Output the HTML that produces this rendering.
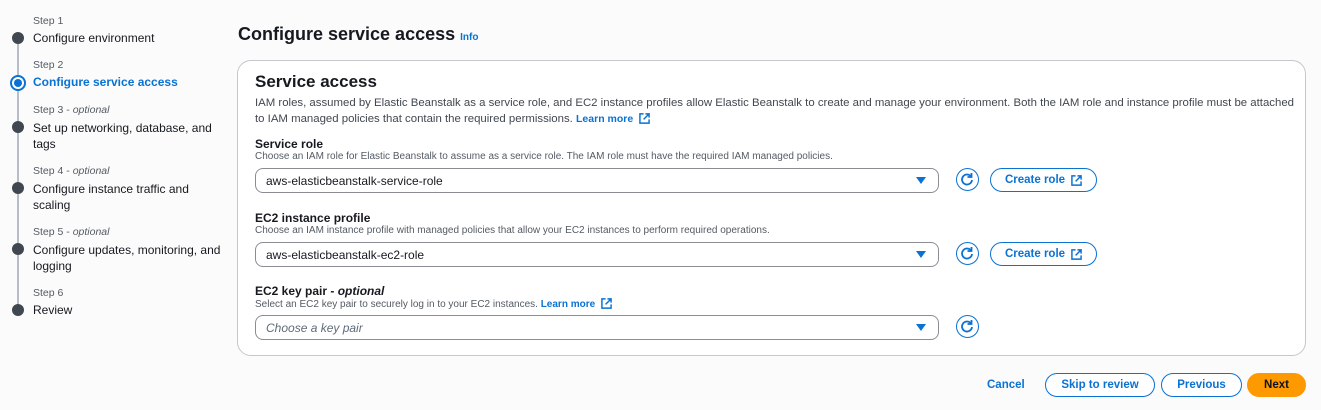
<!DOCTYPE html>
<html><head><style>
*{box-sizing:border-box;margin:0;padding:0}
body{width:1321px;height:410px;background:#fbfbfb;font-family:"Liberation Sans",sans-serif;color:#16191f;position:relative;overflow:hidden}
.a{position:absolute;white-space:nowrap}
.st{font-size:10.5px;color:#545b64}
.st i{font-style:italic}
.sl{font-size:12px;color:#16191f}
.dot{position:absolute;left:12px;width:12px;height:12px;border-radius:50%;background:#414750}
.line{position:absolute;left:17px;width:2px;background:#b6bec9}
.card{position:absolute;left:237px;top:60px;width:1069px;height:296px;background:#fff;border:1px solid #c6c6cd;border-radius:14px}
.lab{font-size:12px;font-weight:bold}
.desc{font-size:10px;color:#545b64}
.sel{position:absolute;left:255px;width:684px;height:25px;border:1px solid #8c8c94;border-radius:8px;font-size:12px;padding:5px 10px;background:#fff}
.sel:after{content:"";position:absolute;right:12px;top:8px;border-left:5px solid transparent;border-right:5px solid transparent;border-top:7px solid #0972d3}
.rf{position:absolute;left:956px;width:23px;height:23px;border:1.5px solid #0972d3;border-radius:50%}
.btn{position:absolute;border:1.5px solid #0972d3;border-radius:14px;color:#0972d3;font-weight:bold;font-size:11.5px;display:flex;align-items:center;justify-content:center;background:#fff;height:24px}
.ext{display:inline-block;vertical-align:-2px;margin-left:6px}
a{color:#0972d3;text-decoration:none}
</style></head><body>
<div class="line" style="top:44px;height:32px"></div>
<div class="line" style="top:90px;height:35px"></div>
<div class="line" style="top:132px;height:50px"></div>
<div class="line" style="top:194px;height:50px"></div>
<div class="line" style="top:255px;height:50px"></div>
<div class="a st" style="left:33px;top:15px">Step 1</div>
<div class="a sl" style="left:33px;top:31px">Configure environment</div>
<div class="dot" style="top:32px"></div>
<div class="a st" style="left:33px;top:59px">Step 2</div>
<div class="a sl" style="left:33px;top:75px;color:#0972d3;font-weight:bold">Configure service access</div>
<div style="position:absolute;left:10px;top:75px;width:16px;height:16px;border:2px solid #0972d3;border-radius:50%;background:#fff"><div style="position:absolute;left:2px;top:2px;width:8px;height:8px;border-radius:50%;background:#0972d3"></div></div>
<div class="a st" style="left:33px;top:104px">Step 3 - <i>optional</i></div>
<div class="a sl" style="left:33px;top:120px;line-height:16px">Set up networking, database, and<br>tags</div>
<div class="dot" style="top:121px"></div>
<div class="a st" style="left:33px;top:165px">Step 4 - <i>optional</i></div>
<div class="a sl" style="left:33px;top:181px;line-height:16px">Configure instance traffic and<br>scaling</div>
<div class="dot" style="top:182px"></div>
<div class="a st" style="left:33px;top:226px">Step 5 - <i>optional</i></div>
<div class="a sl" style="left:33px;top:242px;line-height:16px">Configure updates, monitoring, and<br>logging</div>
<div class="dot" style="top:243px"></div>
<div class="a st" style="left:33px;top:287px">Step 6</div>
<div class="a sl" style="left:33px;top:303px">Review</div>
<div class="dot" style="top:304px"></div>

<div class="a" style="left:238px;top:24px;font-size:18px;font-weight:bold">Configure service access <a style="font-size:10px">Info</a></div>

<div class="card"></div>
<div class="a" style="left:255px;top:72px;font-size:17px;font-weight:bold">Service access</div>
<div class="a" style="left:255px;top:95px;font-size:11.4px;color:#414750;line-height:16px">IAM roles, assumed by Elastic Beanstalk as a service role, and EC2 instance profiles allow Elastic Beanstalk to create and manage your environment. Both the IAM role and instance profile must be attached<br>to IAM managed policies that contain the required permissions. <a style="font-weight:bold;font-size:10.5px">Learn more<svg class="ext" width="11" height="11" viewBox="0 0 12 12" fill="none" stroke="#0972d3" stroke-width="1.6"><path d="M5 1H1v10h10V7M7 1h4v4M11 1 5 7"/></svg></a></div>

<div class="a lab" style="left:255px;top:137px">Service role</div>
<div class="a desc" style="left:255px;top:151px">Choose an IAM role for Elastic Beanstalk to assume as a service role. The IAM role must have the required IAM managed policies.</div>
<div class="sel" style="top:168px">aws-elasticbeanstalk-service-role</div>
<div class="rf" style="top:168px"><svg width="20" height="20" viewBox="0 0 20 20" fill="none" stroke="#0972d3" stroke-width="1.8"><path d="M14 7.5A5 5 0 1 0 15 11"/><path d="M14.5 4v4h-4"/></svg></div>
<div class="btn" style="left:990px;top:168px;width:107px">Create role<svg class="ext" width="11" height="11" viewBox="0 0 12 12" fill="none" stroke="#0972d3" stroke-width="1.6"><path d="M5 1H1v10h10V7M7 1h4v4M11 1 5 7"/></svg></div>

<div class="a lab" style="left:255px;top:211px">EC2 instance profile</div>
<div class="a desc" style="left:255px;top:225px">Choose an IAM instance profile with managed policies that allow your EC2 instances to perform required operations.</div>
<div class="sel" style="top:242px">aws-elasticbeanstalk-ec2-role</div>
<div class="rf" style="top:242px"><svg width="20" height="20" viewBox="0 0 20 20" fill="none" stroke="#0972d3" stroke-width="1.8"><path d="M14 7.5A5 5 0 1 0 15 11"/><path d="M14.5 4v4h-4"/></svg></div>
<div class="btn" style="left:990px;top:242px;width:107px">Create role<svg class="ext" width="11" height="11" viewBox="0 0 12 12" fill="none" stroke="#0972d3" stroke-width="1.6"><path d="M5 1H1v10h10V7M7 1h4v4M11 1 5 7"/></svg></div>

<div class="a lab" style="left:255px;top:284px">EC2 key pair - <i>optional</i></div>
<div class="a desc" style="left:255px;top:298px">Select an EC2 key pair to securely log in to your EC2 instances. <a style="font-weight:bold">Learn more<svg class="ext" width="11" height="11" viewBox="0 0 12 12" fill="none" stroke="#0972d3" stroke-width="1.6"><path d="M5 1H1v10h10V7M7 1h4v4M11 1 5 7"/></svg></a></div>
<div class="sel" style="top:315px;color:#5f6b7a;font-style:italic">Choose a key pair</div>
<div class="rf" style="top:315px"><svg width="20" height="20" viewBox="0 0 20 20" fill="none" stroke="#0972d3" stroke-width="1.8"><path d="M14 7.5A5 5 0 1 0 15 11"/><path d="M14.5 4v4h-4"/></svg></div>

<div class="a" style="left:987px;top:379px;font-size:11.5px;font-weight:bold;color:#0972d3">Cancel</div>
<div class="btn" style="left:1045px;top:373px;width:110px">Skip to review</div>
<div class="btn" style="left:1161px;top:373px;width:81px">Previous</div>
<div class="btn" style="left:1247px;top:373px;width:59px;background:#ff9900;border-color:#ff9900;color:#0f141a">Next</div>
</body></html>
